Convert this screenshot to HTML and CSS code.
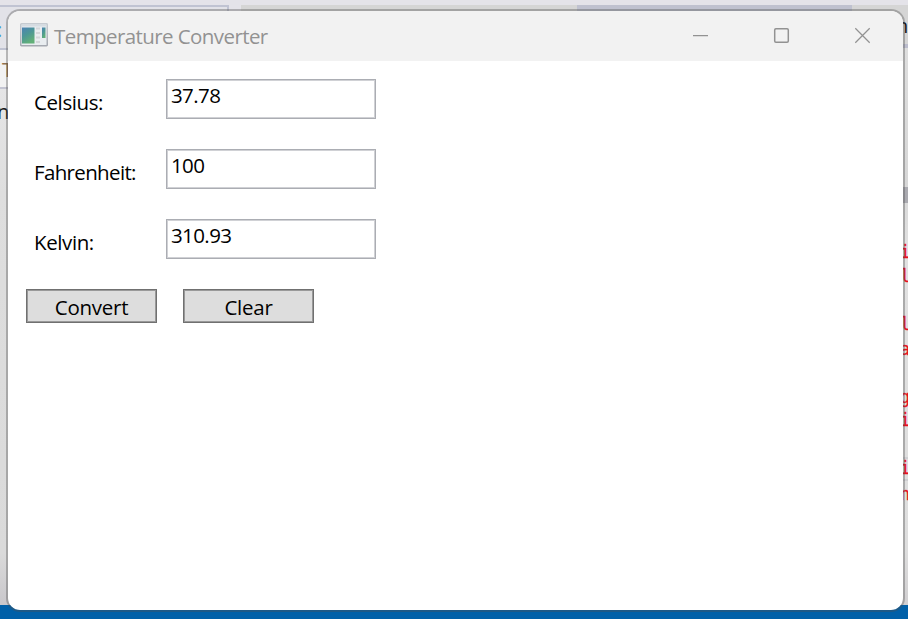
FILE: index.html
```html
<!DOCTYPE html>
<html lang="en">
<head>
<meta charset="utf-8">
<title>Temperature Converter</title>
<link rel="stylesheet" href="styles.css">
</head>
<body>
<div class="desktop">
  <div class="backdrop">
    <div class="bd tab-left"></div>
    <div class="bd tab-mid"></div>
    <div class="bd tab-right"></div>
    <div class="bd tab-far"></div>
    <div class="bd rule-right"></div>
    <div class="bd strip-left"></div>
    <div class="bd left-pane"></div>
    <div class="bd right-pane"></div>
    <div class="bd scroll-mark"></div>
    <div class="bd line-a"></div>
    <div class="bd line-b"></div>
    <div class="bd taskbar"></div>
    <span class="bd frag blue">:</span>
    <span class="bd frag brown">T</span>
    <span class="bd frag dark-left">n</span>
    <span class="bd frag dark-right">n</span>
    <span class="bd code c1">i</span>
    <span class="bd code c2">l</span>
    <span class="bd code c3">l</span>
    <span class="bd code c4">a</span>
    <span class="bd code c5">g</span>
    <span class="bd code c6">i</span>
    <span class="bd code c7">i</span>
    <span class="bd code c8">n</span>
  </div>
  <main class="window">
    <header class="titlebar">
      <svg class="app-icon" width="28" height="24" viewBox="0 0 28 24">
        <defs>
          <linearGradient id="pane" x1="0" y1="0" x2=".5" y2="1"><stop offset="0" stop-color="#4d82b5"/><stop offset=".5" stop-color="#4c9796"/><stop offset="1" stop-color="#62b078"/></linearGradient>
          <linearGradient id="frame" x1="0" y1="0" x2="0" y2="1"><stop offset="0" stop-color="#c6cbd1"/><stop offset="1" stop-color="#a4a8b0"/></linearGradient>
        </defs>
        <rect x=".75" y=".75" width="26.5" height="22" rx=".7" fill="#e9edf0" stroke="url(#frame)" stroke-width="1.5"/>
        <path d="M2 2.5H26" stroke="#d5dce2" stroke-width="2"/>
        <rect x="2" y="4.5" width="12.5" height="16" fill="url(#pane)"/>
        <path d="M16 5.5h4M16 10h4M16 14.5h4M16 19h4" stroke="#d3d6d9" stroke-width="2"/>
        <rect x="22" y="4.5" width="3.5" height="10.5" fill="url(#pane)"/>
      </svg>
      <h1 class="title">Temperature Converter</h1>
      <div class="controls">
        <svg width="81" height="49" viewBox="0 0 81 49"><path d="M33 24.5h15"/></svg>
        <svg width="81" height="49" viewBox="0 0 81 49"><rect x="33.7" y="17.7" width="13.6" height="13.6" rx="1.2" stroke-width="1.5"/></svg>
        <svg width="81" height="49" viewBox="0 0 81 49"><path d="M33.3 17.3l14.4 14.4M47.7 17.3L33.3 31.7"/></svg>
      </div>
    </header>
    <form class="form">
      <div class="row"><label class="label" for="c">Celsius:</label><input class="box" id="c" value="37.78"></div>
      <div class="row"><label class="label fahrenheit" for="f">Fahrenheit:</label><input class="box" id="f" value="100"></div>
      <div class="row"><label class="label" for="k">Kelvin:</label><input class="box" id="k" value="310.93"></div>
      <div class="buttons"><button class="button" type="button">Convert</button><button class="button" type="button">Clear</button></div>
    </form>
  </main>
</div>
</body>
</html>
```

FILE: styles.css
```css
* { box-sizing: border-box; }
body { margin: 0; }
.desktop {
  position: relative;
  width: 908px;
  height: 619px;
  padding: 9px 3px 7px 6px;
  overflow: hidden;
  background: #e4e3e9;
  font-family: "Open Sans", "Noto Sans", sans-serif;
}
.backdrop { position: absolute; inset: 0; }
.bd { position: absolute; }
.tab-left { left: 0; top: 5px; width: 229px; height: 45px; border: 2px solid #c0c3d2; border-left: 0; background: #e2e2e8; }
.tab-mid { left: 241px; top: 5px; width: 336px; height: 6px; background: #d5d5d5; }
.tab-right { left: 577px; top: 5px; width: 275px; height: 6px; background: #bfc1cf; }
.tab-far { left: 852px; top: 5px; width: 56px; height: 39px; background: #d5d5d5; }
.rule-right { left: 900px; top: 44px; width: 8px; height: 4px; background: #bcbdcd; }
.strip-left { left: 0; top: 50px; width: 10px; height: 39px; background: #f2f2f2; border-bottom: 2px solid #c4c5d2; }
.left-pane { left: 0; top: 89px; width: 10px; height: 516px; background: linear-gradient(#e5e5e6, #dedede 20%, #dadada 90%, #c9c7cb); }
.right-pane { left: 900px; top: 48px; width: 8px; height: 557px; background: linear-gradient(#dedede, #d7d7d7 24%, #e1e1e1 36%, #dedede 90%, #d1cfd1); }
.scroll-mark { left: 902px; top: 187px; width: 6px; height: 16px; background: #aaaab0; }
.line-a, .line-b { left: 902px; width: 6px; height: 2px; background: #cfcfd2; }
.line-a { top: 457px; }
.line-b { top: 479px; }
.taskbar { left: 0; top: 605px; width: 908px; height: 14px; background: #0060a8; }
.frag { font-size: 20px; line-height: 24px; }
.blue { left: -3px; top: 18px; color: #3f97d4; }
.brown { left: 2px; top: 58px; color: #90704d; }
.dark-left { left: -3px; top: 100px; color: #171717; }
.dark-right { left: 896px; top: 14px; color: #161616; }
.code { left: 900px; color: #e8101c; font: 17px/24px "DejaVu Sans Mono", monospace; -webkit-text-stroke: .3px #e8101c; }
.c1 { top: 240px; }
.c2 { top: 264px; }
.c3 { top: 312px; }
.c4 { top: 337px; }
.c5 { top: 385px; }
.c6 { top: 408px; }
.c7 { top: 456px; }
.c8 { top: 482px; }

.window {
  position: relative;
  width: 899px;
  height: 603px;
  overflow: hidden;
  border: 2px solid rgba(80, 80, 80, .37);
  border-radius: 14px;
  background: #fff;
  background-clip: padding-box;
}
.titlebar { display: flex; height: 50px; padding-left: 12px; background: #f2f2f2; }
.app-icon { flex: none; margin-top: 12px; }
.title { flex: 1; margin: 0 0 0 6px; color: #929292; font-size: 20.5px; font-weight: 400; line-height: 51px; letter-spacing: -.58px; white-space: nowrap; }
.controls { display: flex; }
.controls svg { fill: none; stroke: #929292; stroke-width: 1.25; }
.form { padding: 18px 0 0 18px; }
.row { display: flex; height: 40px; margin-bottom: 30px; }
.label { width: 140px; padding-left: 8px; font-size: 20.5px; line-height: 47px; letter-spacing: -.4px; white-space: nowrap; color: #000; }
.fahrenheit { letter-spacing: -.65px; }
.box { width: 210px; height: 40px; padding: 0 4px 9px; border: 1px solid #abadb3; border-radius: 0; outline: 0; background: #fff; box-shadow: inset 0 0 0 1px #d0d1d5; font: 20.5px "Open Sans", sans-serif; letter-spacing: -.6px; color: #000; }
.buttons { display: flex; gap: 26px; }
.button { width: 131px; height: 34px; padding: 1px 0 0; border: 1px solid #707070; border-radius: 0; background: #ddd; box-shadow: inset 0 0 0 1px #999; color: #000; font: 20.5px/26px "Open Sans", sans-serif; letter-spacing: -.25px; }
```
